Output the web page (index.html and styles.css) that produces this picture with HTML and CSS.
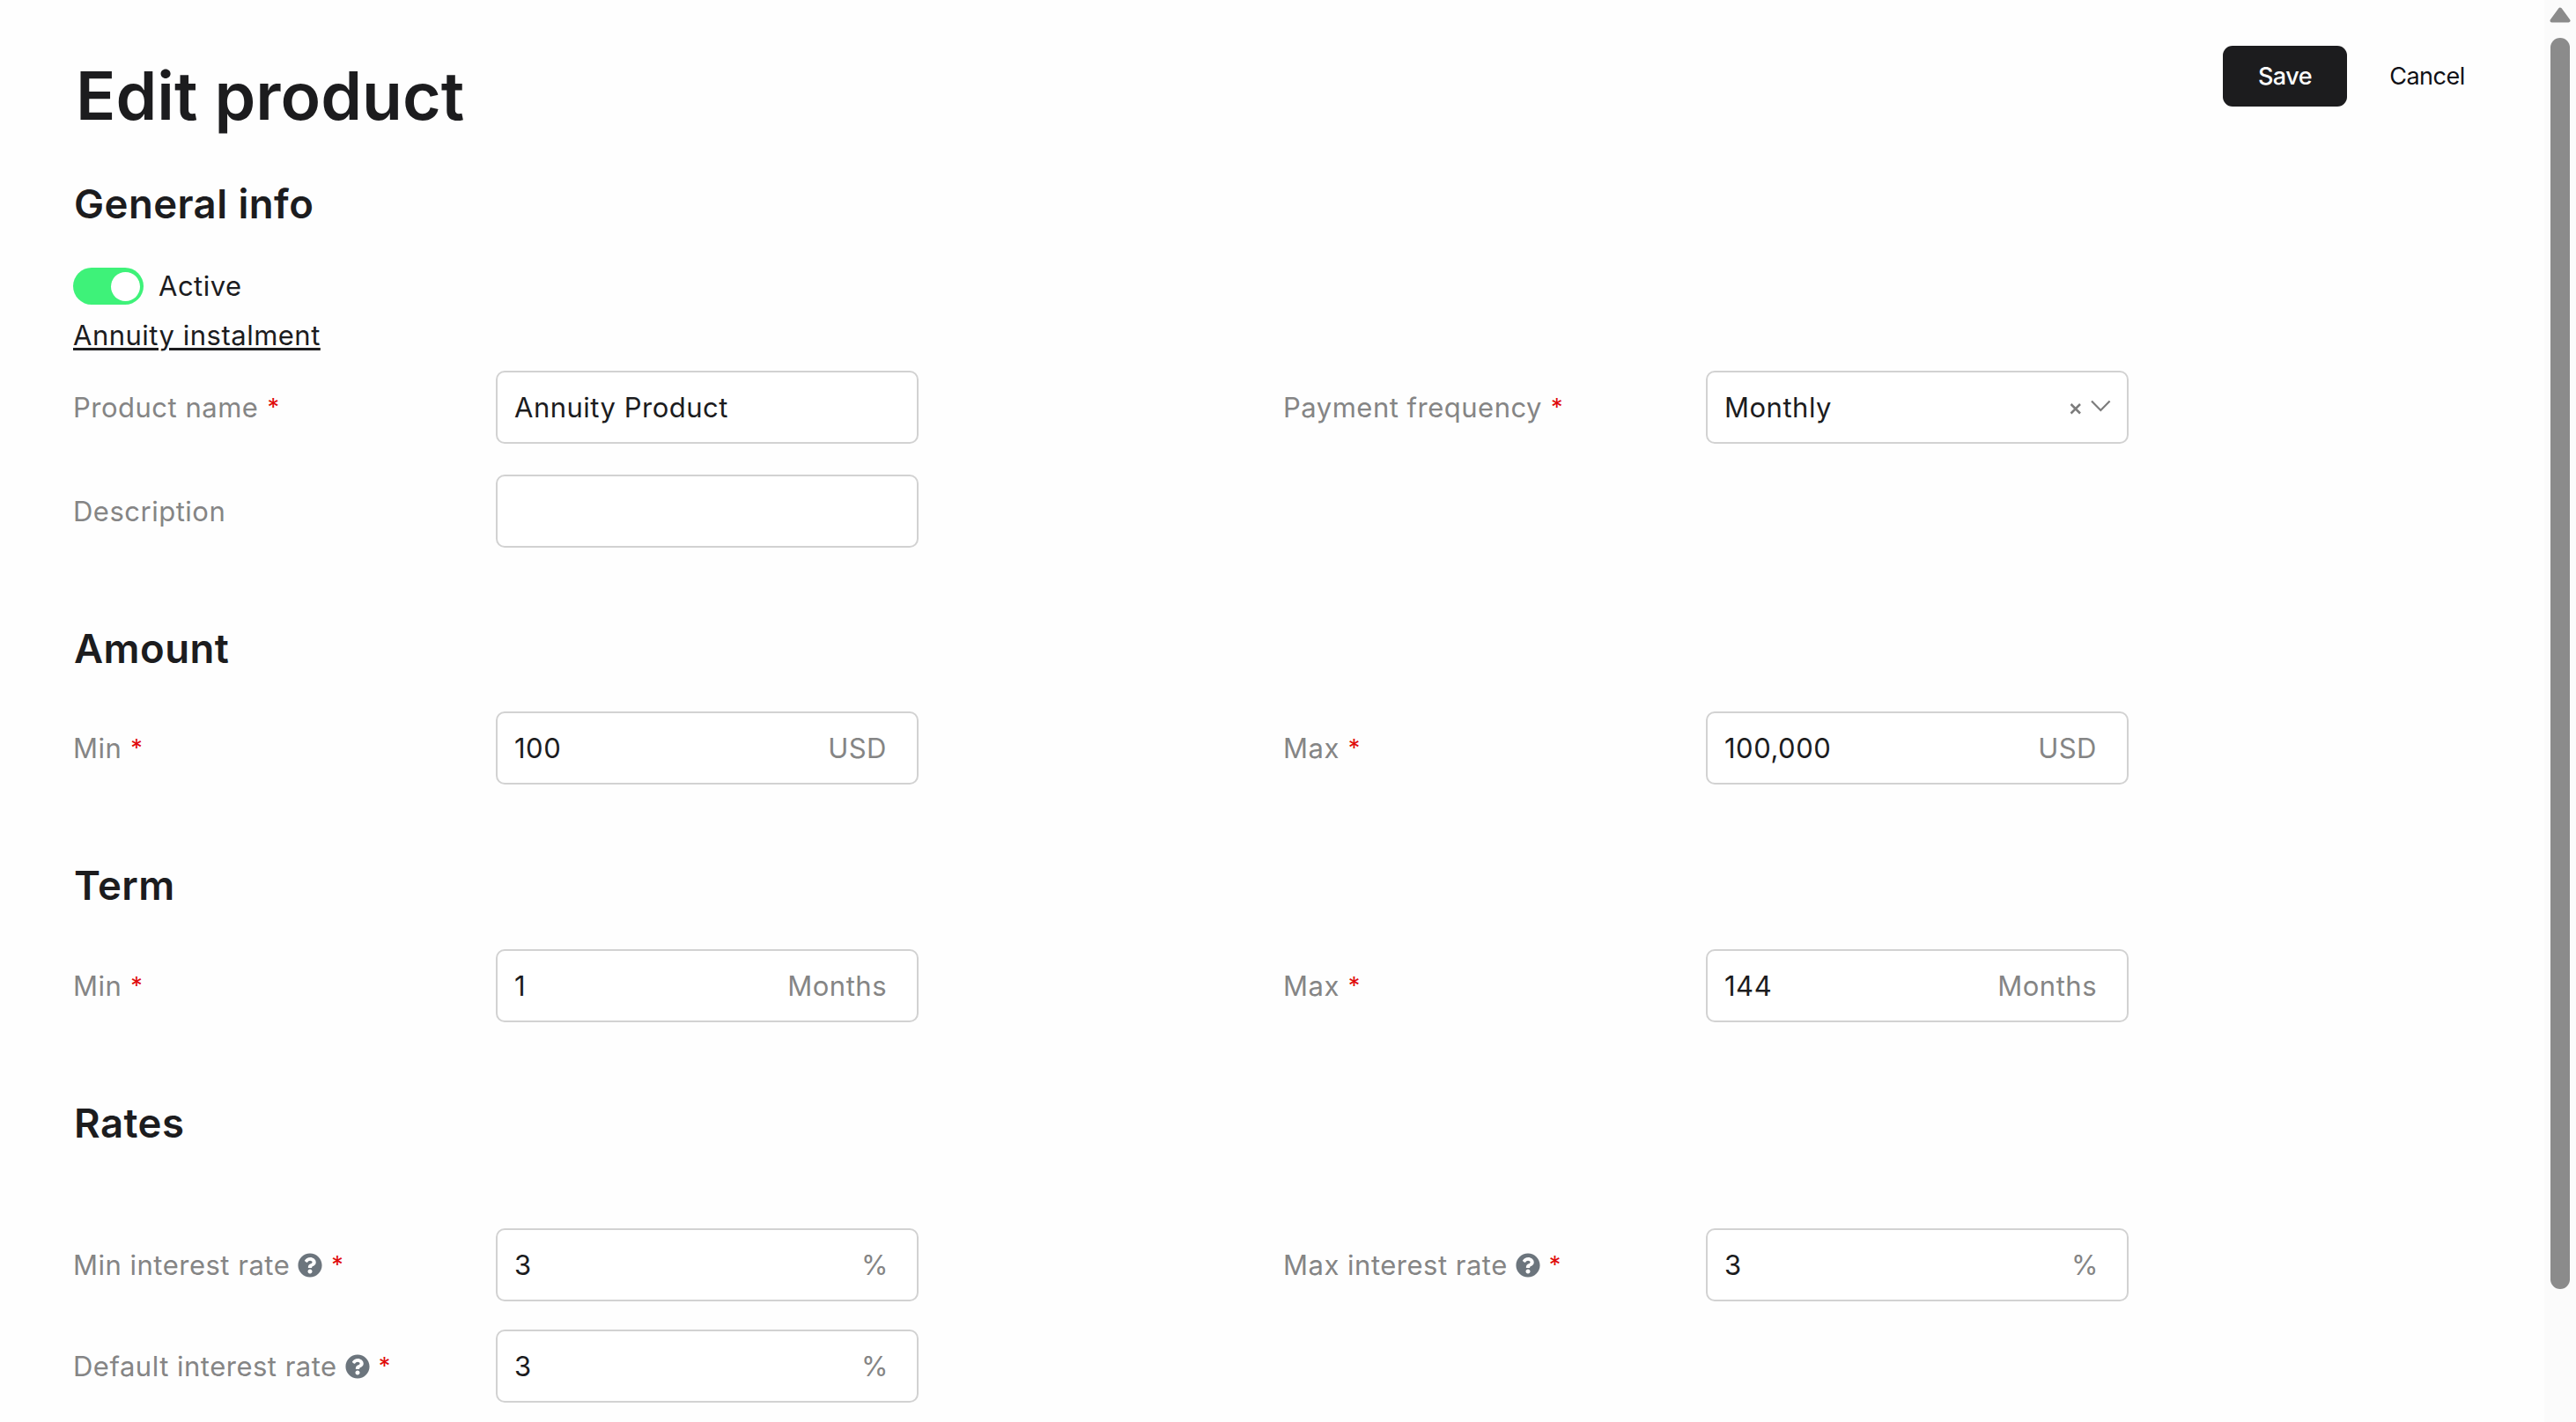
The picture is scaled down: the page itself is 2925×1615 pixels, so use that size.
FILE: index.html
```html
<!DOCTYPE html>
<html lang="en">
<head>
<meta charset="utf-8">
<title>Edit product</title>
<link rel="stylesheet" href="styles.css">
</head>
<body>
<svg class="sprite" aria-hidden="true">
  <symbol id="help" viewBox="0 0 512 512"><path fill="currentColor" d="M504 256c0 137-111 248-248 248S8 393 8 256C8 119.100 119 8 256 8s248 111.100 248 248zM262.700 90c-54.500 0-89.300 23-116.500 63.800-3.500 5.300-2.400 12.400 2.700 16.300l34.700 26.300c5.200 3.900 12.600 3 16.700-2.100 17.900-22.700 30.100-35.800 57.300-35.800 20.400 0 45.700 13.100 45.700 33 0 15-12.400 22.700-32.500 34C247.100 238.500 216 255 216 296v4c0 6.600 5.400 12 12 12h56c6.600 0 12-5.400 12-12v-1.300c0-28.500 83.200-29.600 83.200-106.700 0-58-60.200-102-116.500-102zM256 338c-25.400 0-46 20.600-46 46 0 25.400 20.600 46 46 46s46-20.600 46-46c0-25.400-20.600-46-46-46z"/></symbol>
</svg>
<main class="page">
  <header class="header">
    <h1 class="title">Edit product</h1>
    <div class="actions">
      <button class="btn btn-primary">Save</button>
      <button class="btn btn-link">Cancel</button>
    </div>
  </header>

  <section class="section general">
    <h2 class="heading">General info</h2>
    <div class="toggle-row"><span class="toggle"><span class="knob"></span></span><span class="toggle-label">Active</span></div>
    <a class="type-link">Annuity instalment</a>
    <div class="row">
      <div class="label"><span>Product name</span><span class="req">*</span></div>
      <div class="field"><span>Annuity Product</span></div>
      <div class="label"><span>Payment frequency</span><span class="req">*</span></div>
      <div class="field select"><span>Monthly</span>
        <svg class="select-icons" viewBox="0 0 48 20"><path d="M2.500 6l10.500 10.500M13 6l-10.500 10.500" stroke-width="2.500"/><path d="M26 2.500l10.300 10.500L46.600 2.500" stroke-width="2.200"/></svg>
      </div>
    </div>
    <div class="row">
      <div class="label"><span>Description</span></div>
      <div class="field"></div>
    </div>
  </section>

  <section class="section amount">
    <h2 class="heading">Amount</h2>
    <div class="row">
      <div class="label"><span>Min</span><span class="req">*</span></div>
      <div class="field"><span>100</span><span class="unit">USD</span></div>
      <div class="label"><span>Max</span><span class="req">*</span></div>
      <div class="field"><span>100,000</span><span class="unit">USD</span></div>
    </div>
  </section>

  <section class="section term">
    <h2 class="heading">Term</h2>
    <div class="row">
      <div class="label"><span>Min</span><span class="req">*</span></div>
      <div class="field"><span>1</span><span class="unit">Months</span></div>
      <div class="label"><span>Max</span><span class="req">*</span></div>
      <div class="field"><span>144</span><span class="unit">Months</span></div>
    </div>
  </section>

  <section class="section rates">
    <h2 class="heading">Rates</h2>
    <div class="row">
      <div class="label"><span>Min interest rate</span><svg class="help"><use href="#help"/></svg><span class="req">*</span></div>
      <div class="field percent"><span>3</span><span class="unit">%</span></div>
      <div class="label"><span>Max interest rate</span><svg class="help"><use href="#help"/></svg><span class="req">*</span></div>
      <div class="field percent"><span>3</span><span class="unit">%</span></div>
    </div>
    <div class="row">
      <div class="label"><span>Default interest rate</span><svg class="help"><use href="#help"/></svg><span class="req">*</span></div>
      <div class="field percent"><span>3</span><span class="unit">%</span></div>
    </div>
  </section>
</main>
<aside class="scrollbar">
  <svg class="scroll-up" viewBox="0 0 24 18"><path d="M12 2.500L21.500 15.500H2.500Z" fill="#8b8b8b" stroke="#8b8b8b" stroke-width="4" stroke-linejoin="round"/></svg>
  <div class="thumb"></div>
</aside>
</body>
</html>
```
FILE: styles.css
```css
* { box-sizing: border-box; }
body {
  margin: 0;
  height: 1615px;
  overflow: hidden;
  display: flex;
  background: #fefefe;
  color: #1c1c1e;
  font: 400 31px/40px Inter, "Liberation Sans", sans-serif;
  letter-spacing: 0.5px;
}
.sprite { position: absolute; width: 0; height: 0; }
.page { flex: 1; padding: 52px 90px 0 83px; }

.header { display: flex; justify-content: space-between; align-items: flex-start; height: 148px; }
.title { margin: 12px 0 0 3px; font-size: 75px; line-height: 90px; font-weight: 600; letter-spacing: 0.050px; }
.actions { display: flex; gap: 48px; }
.btn {
  display: flex;
  justify-content: center;
  width: 86px;
  height: 69px;
  padding: 0;
  border: 0;
  background: none;
  font: 400 27px/69px Inter, "Liberation Sans", sans-serif;
  letter-spacing: -0.5px;
  color: #101016;
}
.btn-primary { width: 141px; border-radius: 11px; background: #1c1c1e; color: #fff; font-weight: 500; }

.heading { margin: 0 0 0 1px; font-size: 45.500px; line-height: 64px; font-weight: 600; letter-spacing: 0.450px; }

.toggle-row { display: flex; align-items: center; height: 42px; margin-top: 40px; gap: 17px; }
.toggle { display: flex; justify-content: flex-end; align-items: center; width: 80px; height: 42px; padding: 4px; border-radius: 21px; background: #3ef279; }
.knob { width: 33px; height: 33px; border-radius: 50%; background: #fff; }
.type-link { display: block; width: max-content; margin-top: 15px; text-decoration: underline; text-decoration-thickness: 3px; text-underline-offset: 3px; }

.row { display: grid; grid-template-columns: 480px 894px 480px 480px; height: 83px; }
.general .row { margin-top: 20px; }
.general .row + .row { margin-top: 35px; }
.label { display: flex; align-items: center; color: #858585; letter-spacing: 0.5px; }
.req { margin-left: 10px; font-size: 27px; color: #e00b0b; }
.help { width: 28px; height: 28px; margin-left: 9px; color: #6c757d; }
.field {
  display: flex;
  align-items: center;
  justify-content: space-between;
  width: 480px;
  height: 83px;
  padding: 0 34px 0 19px;
  border: 2px solid #d2d2d2;
  border-radius: 10px;
  background: #fff;
}
.unit { color: #858585; }
.percent { padding-right: 32px; }
.select { padding-right: 18px; }
.select-icons { width: 48px; height: 20px; fill: none; stroke: #7c7c7c; }

.amount, .term, .rates { margin-top: 83px; }
.amount .row { margin-top: 39px; }
.term .row { margin-top: 40px; }
.rates .row { margin-top: 87px; }
.rates .row + .row { margin-top: 32px; }

.scrollbar { width: 36px; padding: 8px 7px 0; background: #fbfbfb; }
.scroll-up { display: block; width: 24px; height: 18px; margin-left: -1px; }
.thumb { width: 22px; height: 1421px; margin-top: 17px; border-radius: 11px; background: #8b8b8b; }
```
